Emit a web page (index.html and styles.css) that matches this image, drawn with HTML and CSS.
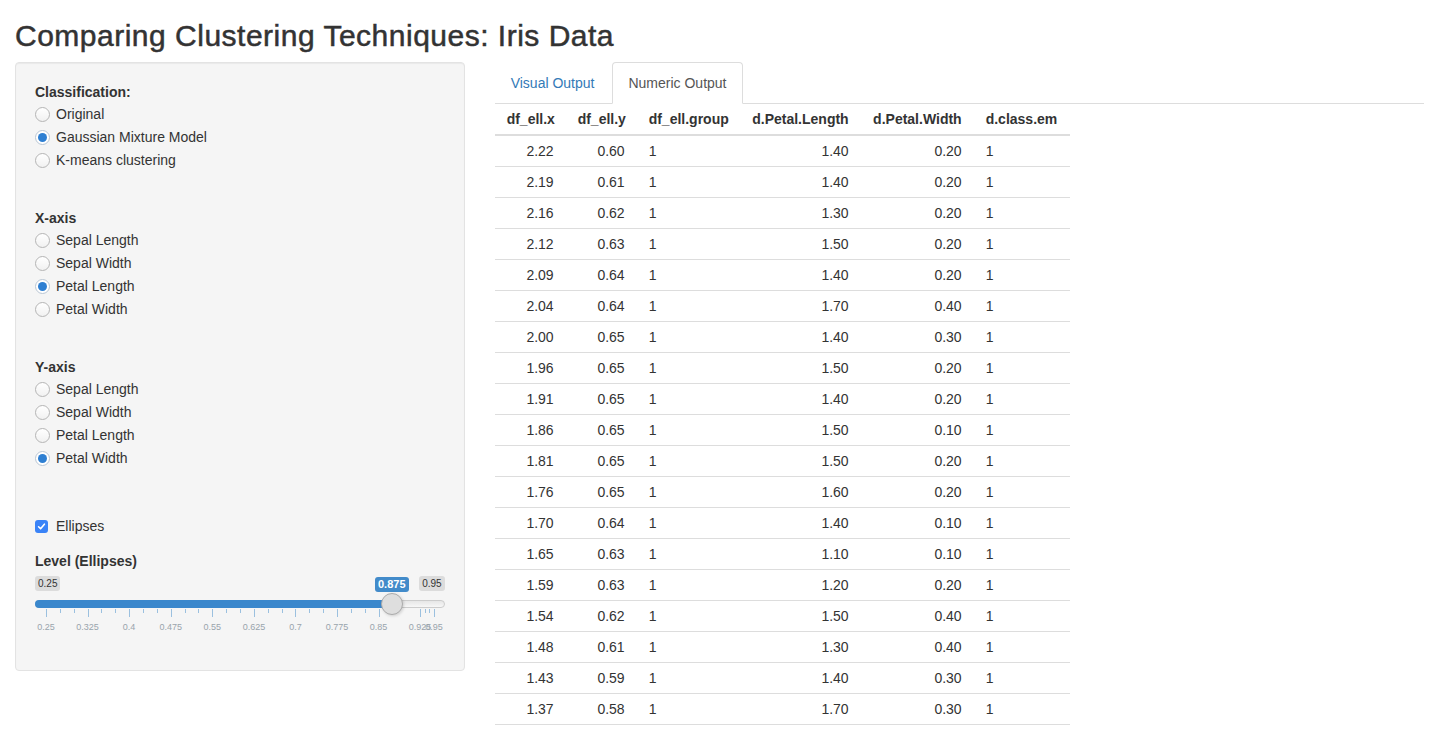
FILE: index.html
```html
<!DOCTYPE html>
<html>
<head>
<meta charset="utf-8">
<title>Comparing Clustering Techniques: Iris Data</title>
<link rel="stylesheet" href="styles.css">
</head>
<body>
<div class="container">
  <h2 class="title">Comparing Clustering Techniques: Iris Data</h2>
  <div class="row">
    <div class="col-side">
      <form class="well">
        <div class="form-group">
          <label class="ctl-label">Classification:</label>
          <div class="opts">
            <label class="radio"><span class="rb"></span>Original</label>
            <label class="radio"><span class="rb on"></span>Gaussian Mixture Model</label>
            <label class="radio"><span class="rb"></span>K-means clustering</label>
          </div>
        </div>
        <div class="form-group">
          <label class="ctl-label">X-axis</label>
          <div class="opts">
            <label class="radio"><span class="rb"></span>Sepal Length</label>
            <label class="radio"><span class="rb"></span>Sepal Width</label>
            <label class="radio"><span class="rb on"></span>Petal Length</label>
            <label class="radio"><span class="rb"></span>Petal Width</label>
          </div>
        </div>
        <div class="form-group group-y">
          <label class="ctl-label">Y-axis</label>
          <div class="opts">
            <label class="radio"><span class="rb"></span>Sepal Length</label>
            <label class="radio"><span class="rb"></span>Sepal Width</label>
            <label class="radio"><span class="rb"></span>Petal Length</label>
            <label class="radio"><span class="rb on"></span>Petal Width</label>
          </div>
        </div>
        <div class="form-group group-check">
          <label class="check"><span class="cb"><svg width="9" height="9" viewBox="0 0 9 9"><path d="M1.6 4.8 L3.6 6.8 L7.4 2.2" fill="none" stroke="#fff" stroke-width="1.6" stroke-linecap="round" stroke-linejoin="round"/></svg></span>Ellipses</label>
        </div>
        <div class="form-group group-slider">
          <label class="ctl-label">Level (Ellipses)</label>
          <div class="irs">
            <span class="irs-min">0.25</span>
            <span class="irs-max">0.95</span>
            <span class="irs-single">0.875</span>
            <span class="irs-line"></span>
            <span class="irs-bar"></span>
            <span class="pol major" style="left:11px"></span>
            <span class="pol" style="left:24.9px"></span>
            <span class="pol" style="left:38.7px"></span>
            <span class="pol major" style="left:52.6px"></span>
            <span class="pol" style="left:66.4px"></span>
            <span class="pol" style="left:80.3px"></span>
            <span class="pol major" style="left:94.1px"></span>
            <span class="pol" style="left:108px"></span>
            <span class="pol" style="left:121.9px"></span>
            <span class="pol major" style="left:135.7px"></span>
            <span class="pol" style="left:149.6px"></span>
            <span class="pol" style="left:163.4px"></span>
            <span class="pol major" style="left:177.3px"></span>
            <span class="pol" style="left:191.1px"></span>
            <span class="pol" style="left:205px"></span>
            <span class="pol major" style="left:218.9px"></span>
            <span class="pol" style="left:232.7px"></span>
            <span class="pol" style="left:246.6px"></span>
            <span class="pol major" style="left:260.4px"></span>
            <span class="pol" style="left:274.3px"></span>
            <span class="pol" style="left:288.1px"></span>
            <span class="pol major" style="left:302px"></span>
            <span class="pol" style="left:315.9px"></span>
            <span class="pol" style="left:329.7px"></span>
            <span class="pol major" style="left:343.6px"></span>
            <span class="pol" style="left:357.4px"></span>
            <span class="pol major" style="left:385.1px"></span>
            <span class="pol" style="left:389.8px"></span>
            <span class="pol" style="left:394.4px"></span>
            <span class="pol major" style="left:399px"></span>
            <span class="gtext" style="left:11px">0.25</span>
            <span class="gtext" style="left:52.6px">0.325</span>
            <span class="gtext" style="left:94.1px">0.4</span>
            <span class="gtext" style="left:135.7px">0.475</span>
            <span class="gtext" style="left:177.3px">0.55</span>
            <span class="gtext" style="left:218.9px">0.625</span>
            <span class="gtext" style="left:260.4px">0.7</span>
            <span class="gtext" style="left:302px">0.775</span>
            <span class="gtext" style="left:343.6px">0.85</span>
            <span class="gtext" style="left:385.1px">0.925</span>
            <span class="gtext" style="left:399px">0.95</span>
            <span class="irs-handle" style="left:346.4px"></span>
          </div>
        </div>
      </form>
    </div>
    <div class="col-main">
      <ul class="nav-tabs">
        <li><a class="tab">Visual Output</a></li>
        <li><a class="tab active">Numeric Output</a></li>
      </ul>
      <table class="table">
        <colgroup>
          <col class="c1"><col class="c2"><col class="c3"><col class="c4"><col class="c5"><col class="c6">
        </colgroup>
        <thead>
          <tr><th class="r">df_ell.x</th><th class="r">df_ell.y</th><th>df_ell.group</th><th class="r">d.Petal.Length</th><th class="r">d.Petal.Width</th><th>d.class.em</th></tr>
        </thead>
        <tbody>
          <tr><td class="r">2.22</td><td class="r">0.60</td><td>1</td><td class="r">1.40</td><td class="r">0.20</td><td>1</td></tr>
          <tr><td class="r">2.19</td><td class="r">0.61</td><td>1</td><td class="r">1.40</td><td class="r">0.20</td><td>1</td></tr>
          <tr><td class="r">2.16</td><td class="r">0.62</td><td>1</td><td class="r">1.30</td><td class="r">0.20</td><td>1</td></tr>
          <tr><td class="r">2.12</td><td class="r">0.63</td><td>1</td><td class="r">1.50</td><td class="r">0.20</td><td>1</td></tr>
          <tr><td class="r">2.09</td><td class="r">0.64</td><td>1</td><td class="r">1.40</td><td class="r">0.20</td><td>1</td></tr>
          <tr><td class="r">2.04</td><td class="r">0.64</td><td>1</td><td class="r">1.70</td><td class="r">0.40</td><td>1</td></tr>
          <tr><td class="r">2.00</td><td class="r">0.65</td><td>1</td><td class="r">1.40</td><td class="r">0.30</td><td>1</td></tr>
          <tr><td class="r">1.96</td><td class="r">0.65</td><td>1</td><td class="r">1.50</td><td class="r">0.20</td><td>1</td></tr>
          <tr><td class="r">1.91</td><td class="r">0.65</td><td>1</td><td class="r">1.40</td><td class="r">0.20</td><td>1</td></tr>
          <tr><td class="r">1.86</td><td class="r">0.65</td><td>1</td><td class="r">1.50</td><td class="r">0.10</td><td>1</td></tr>
          <tr><td class="r">1.81</td><td class="r">0.65</td><td>1</td><td class="r">1.50</td><td class="r">0.20</td><td>1</td></tr>
          <tr><td class="r">1.76</td><td class="r">0.65</td><td>1</td><td class="r">1.60</td><td class="r">0.20</td><td>1</td></tr>
          <tr><td class="r">1.70</td><td class="r">0.64</td><td>1</td><td class="r">1.40</td><td class="r">0.10</td><td>1</td></tr>
          <tr><td class="r">1.65</td><td class="r">0.63</td><td>1</td><td class="r">1.10</td><td class="r">0.10</td><td>1</td></tr>
          <tr><td class="r">1.59</td><td class="r">0.63</td><td>1</td><td class="r">1.20</td><td class="r">0.20</td><td>1</td></tr>
          <tr><td class="r">1.54</td><td class="r">0.62</td><td>1</td><td class="r">1.50</td><td class="r">0.40</td><td>1</td></tr>
          <tr><td class="r">1.48</td><td class="r">0.61</td><td>1</td><td class="r">1.30</td><td class="r">0.40</td><td>1</td></tr>
          <tr><td class="r">1.43</td><td class="r">0.59</td><td>1</td><td class="r">1.40</td><td class="r">0.30</td><td>1</td></tr>
          <tr><td class="r">1.37</td><td class="r">0.58</td><td>1</td><td class="r">1.70</td><td class="r">0.30</td><td>1</td></tr>
        </tbody>
      </table>
    </div>
  </div>
</div>
</body>
</html>
```
FILE: styles.css
```css
html, body {
  margin: 0;
  padding: 0;
  background: #fff;
}
body {
  font-family: "Liberation Sans", Arial, Helvetica, sans-serif;
  font-size: 14px;
  line-height: 20px;
  color: #333;
  overflow: hidden;
}
.container {
  padding: 0 15px;
}
.title {
  margin: 19px 0 10px;
  font-size: 30px;
  line-height: 33px;
  font-weight: 500;
  letter-spacing: 0.5px;
  -webkit-text-stroke: 0.5px #333;
  color: #333;
}
.row {
  display: grid;
  grid-template-columns: 1fr 2fr;
  margin: 0 -15px;
}
.col-side, .col-main {
  padding: 0 15px;
  min-width: 0;
}
.well {
  display: block;
  margin: 0;
  padding: 19px 19px 20px;
  background: #f5f5f5;
  border: 1px solid #e3e3e3;
  border-radius: 4px;
  box-shadow: inset 0 1px 1px rgba(0, 0, 0, 0.05);
}
.form-group {
  margin-bottom: 38px;
}
.group-y {
  margin-bottom: 48px;
}
.group-check {
  margin-bottom: 15px;
}
.group-slider {
  margin-bottom: 0;
}
.ctl-label {
  display: block;
  font-weight: 700;
  line-height: 20px;
  margin-bottom: 2px;
}
.opts {
  display: flex;
  flex-direction: column;
  gap: 3px;
}
.radio, .check {
  display: flex;
  align-items: center;
  height: 20px;
  font-weight: 400;
}
.rb {
  box-sizing: border-box;
  width: 15px;
  height: 15px;
  margin-right: 6px;
  border: 1px solid #b5b5b5;
  border-radius: 50%;
  background: linear-gradient(#fff, #f1f1f1);
  display: flex;
  align-items: center;
  justify-content: center;
}
.rb.on {
  border-color: #b9c6d4;
  background: #fff;
}
.rb.on::after {
  content: "";
  width: 9px;
  height: 9px;
  border-radius: 50%;
  background: #2e7fd2;
}
.cb {
  box-sizing: border-box;
  width: 13px;
  height: 13px;
  margin-right: 8px;
  border-radius: 3px;
  background: #3a83f7;
  display: flex;
  align-items: center;
  justify-content: center;
}
.cb svg {
  display: block;
}
.group-slider .ctl-label {
  margin-bottom: 5px;
}
.irs {
  position: relative;
  height: 74px;
}
.irs-min, .irs-max {
  position: absolute;
  top: 0;
  font-size: 10px;
  line-height: 13px;
  padding: 1px 3px;
  border-radius: 3px;
  background: rgba(0, 0, 0, 0.1);
  color: #333;
}
.irs-min { left: 0; }
.irs-max { right: 0; }
.irs-single {
  position: absolute;
  top: 1px;
  left: 340px;
  font-size: 11px;
  line-height: 13px;
  padding: 1px 3px;
  border-radius: 3px;
  background: #428bca;
  color: #fff;
  font-weight: 700;
}
.irs-line {
  position: absolute;
  top: 24px;
  left: 0;
  right: 0;
  height: 8px;
  box-sizing: border-box;
  border: 1px solid #cccccc;
  border-radius: 8px;
  background: linear-gradient(to bottom, #dedede -50%, #fff 150%);
}
.irs-bar {
  position: absolute;
  top: 24px;
  left: 0;
  width: 358px;
  height: 8px;
  background: #3a87cc;
  border-radius: 8px 0 0 8px;
}
.irs-handle {
  position: absolute;
  top: 17px;
  width: 22px;
  height: 22px;
  box-sizing: border-box;
  border: 1px solid #ababab;
  border-radius: 50%;
  background: #dedede;
  box-shadow: 1px 1px 3px rgba(0, 0, 0, 0.15);
}
.pol {
  position: absolute;
  top: 33px;
  width: 1px;
  height: 4px;
  background: #428bca;
  opacity: 0.5;
}
.pol.major {
  height: 8px;
}
.gtext {
  position: absolute;
  top: 46px;
  font-size: 9px;
  line-height: 10px;
  color: #99a4ac;
  transform: translateX(-50%);
  white-space: nowrap;
}
.nav-tabs {
  display: flex;
  list-style: none;
  margin: 0;
  padding: 0;
  border-bottom: 1px solid #ddd;
}
.nav-tabs li {
  margin-bottom: -1px;
  margin-right: 2px;
}
.tab {
  display: block;
  padding: 10px 15px;
  line-height: 20px;
  border: 1px solid transparent;
  border-radius: 4px 4px 0 0;
  color: #337ab7;
}
.tab.active {
  color: #555;
  background: #fff;
  border-color: #ddd #ddd transparent;
}
.table {
  border-collapse: collapse;
  table-layout: fixed;
  width: 575px;
}
.c1 { width: 71px; }
.c2 { width: 71px; }
.c3 { width: 103px; }
.c4 { width: 121px; }
.c5 { width: 113px; }
.c6 { width: 96px; }
.table th, .table td {
  padding: 5px 12px;
  line-height: 20px;
  text-align: left;
  white-space: nowrap;
}
.table th {
  font-weight: 700;
  border-bottom: 2px solid #ddd;
}
.table td {
  border-top: 1px solid #ddd;
}
.table tbody tr:last-child td {
  border-bottom: 1px solid #ddd;
}
.table .r {
  text-align: right;
}
```
